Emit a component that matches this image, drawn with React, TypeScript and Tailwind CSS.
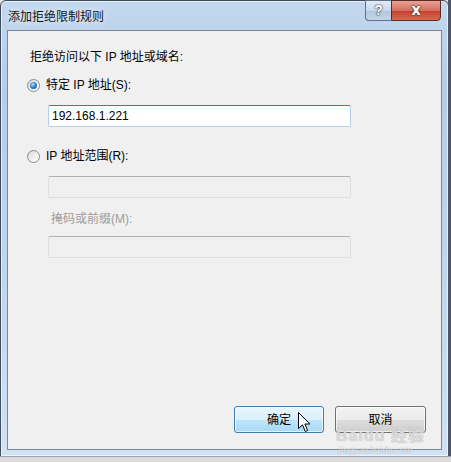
import React from 'react';

const font = { fontFamily: '"Liberation Sans", "Noto Sans CJK SC", sans-serif' };

function Radio({ checked }: { checked?: boolean }) {
  return (
    <div className="w-[13px] h-[13px] rounded-full border border-[#8a8a8a] bg-[linear-gradient(135deg,#d6d6d6,#f7f7f7_70%,#ffffff)] flex items-center justify-center shrink-0">
      {checked && (
        <div className="w-[7px] h-[7px] rounded-full bg-[radial-gradient(circle_at_40%_35%,#b8e2fb,#2f85d0_45%,#124a8c)]" />
      )}
    </div>
  );
}

export default function App() {
  return (
    <div className="w-[451px] h-[462px] bg-[#e4e4e4] relative overflow-hidden text-[12px] text-black" style={font}>
      {/* desktop behind */}
      <div className="absolute right-0 top-0 w-[3px] h-full bg-[#4a5566]" />
      <div className="absolute left-0 bottom-0 w-full h-[6px] bg-[#dcdcdc] border-t border-[#9aa4b0]" />

      {/* window */}
      <div className="w-[449px] h-[457px] rounded-t-[6px] border border-[#3f4c5d] bg-[linear-gradient(to_bottom,#c3d8ee,#b5cde8_20%,#c0d6ed_60%,#d0e2f3)] flex flex-col shadow-[inset_0_0_0_1px_rgba(255,255,255,0.6)]">
        {/* title bar */}
        <div className="h-[29px] flex items-start justify-between shrink-0">
          <div className="pl-[7px] pt-[8px] leading-[16px] text-[12px] text-[#111] [text-shadow:0_0_6px_#ffffff]">添加拒绝限制规则</div>
          <div className="flex mr-[7px] -mt-[1px]">
            <div className="w-[26px] h-[21px] rounded-bl-[4px] border border-[#5e6f87] border-r-0 bg-[linear-gradient(to_bottom,#e3ecf6,#c9d8ea_50%,#b3c6de_51%,#c4d5e8)] flex items-center justify-center text-white font-bold text-[14px] [text-shadow:0_0_2px_#1d2b3d,0_0_1px_#1d2b3d]">?</div>
            <div className="w-[50px] h-[21px] rounded-br-[4px] border border-[#5c2b26] bg-[linear-gradient(to_bottom,#e8a394,#d46f5f_50%,#c2402d_51%,#d86a4e)] flex items-center justify-center text-white font-bold text-[15px] [text-shadow:0_0_2px_#3a0f0a,0_0_1px_#3a0f0a]" style={{ fontFamily: '"DejaVu Sans", sans-serif' }}>x</div>
          </div>
        </div>

        {/* client area */}
        <div className="mx-[6px] h-[420px] border border-[#7b8898] bg-[#f0f0f0] flex flex-col pl-[19px] pt-[18px] pr-[15px] pb-[16px]">
          <div className="ml-[3px] leading-[16px]">拒绝访问以下 IP 地址或域名:</div>

          <div className="mt-[12px] flex items-center gap-[6px] h-[16px]">
            <Radio checked />
            <span className="leading-[16px]">特定 IP 地址(S):</span>
          </div>
          <div className="mt-[12px] ml-[21px] w-[303px] h-[22px] bg-white rounded-[2px] border border-[#b5cfe7] border-t-[#3d7bad] flex items-center pl-[3px] text-[12px]">
            192.168.1.221
          </div>

          <div className="mt-[21px] flex items-center gap-[6px] h-[16px]">
            <Radio />
            <span className="leading-[16px]">IP 地址范围(R):</span>
          </div>
          <div className="mt-[12px] ml-[21px] w-[303px] h-[22px] rounded-[2px] border border-[#dbdfe6] border-t-[#adb2b5] bg-[#f0f0f0]" />

          <div className="mt-[13px] ml-[24px] leading-[16px] text-[#9d9d9d]">掩码或前缀(M):</div>
          <div className="mt-[9px] ml-[21px] w-[303px] h-[22px] rounded-[2px] border border-[#dbdfe6] border-t-[#adb2b5] bg-[#f0f0f0]" />

          <div className="mt-auto flex justify-end gap-[11px]">
            <button className="w-[90px] h-[27px] rounded-[3px] border border-[#3c7fb1] bg-[linear-gradient(to_bottom,#eaf6fd,#d9f0fc_50%,#bee6fd_51%,#a7d9f5)] shadow-[inset_0_0_0_1px_rgba(255,255,255,0.7)] text-[12px]">
              确定
            </button>
            <button className="w-[91px] h-[27px] rounded-[3px] border border-[#707070] bg-[linear-gradient(to_bottom,#f2f2f2,#ebebeb_50%,#dddddd_51%,#cfcfcf)] shadow-[inset_0_0_0_1px_rgba(255,255,255,0.7)] text-[12px] leading-[14px]">
              取消
            </button>
          </div>
        </div>
      </div>

      {/* mouse cursor */}
      <svg className="absolute left-[298px] top-[412px]" width="13" height="21" viewBox="0 0 13 21">
        <path d="M0.5 0.5 L0.5 16.5 L4.5 12.8 L7.3 19.5 L9.6 18.5 L6.9 12 L12 12 Z" fill="#ffffff" stroke="#000000" strokeWidth="1" strokeLinejoin="miter" />
      </svg>

      {/* watermark */}
      <div className="absolute left-[336px] top-[428px] text-[16px] font-bold text-white/60 [text-shadow:0_0_1px_#9a9a9a] leading-[15px] tracking-[1px]">
        Baidu 经验
      </div>
      <div className="absolute left-[338px] top-[444px] text-[10px] text-white/70 [text-shadow:0_0_1px_#9a9a9a] leading-[11px]" style={{ fontFamily: '"Liberation Serif", serif' }}>
        jingyan.baidu.com
      </div>
    </div>
  );
}
